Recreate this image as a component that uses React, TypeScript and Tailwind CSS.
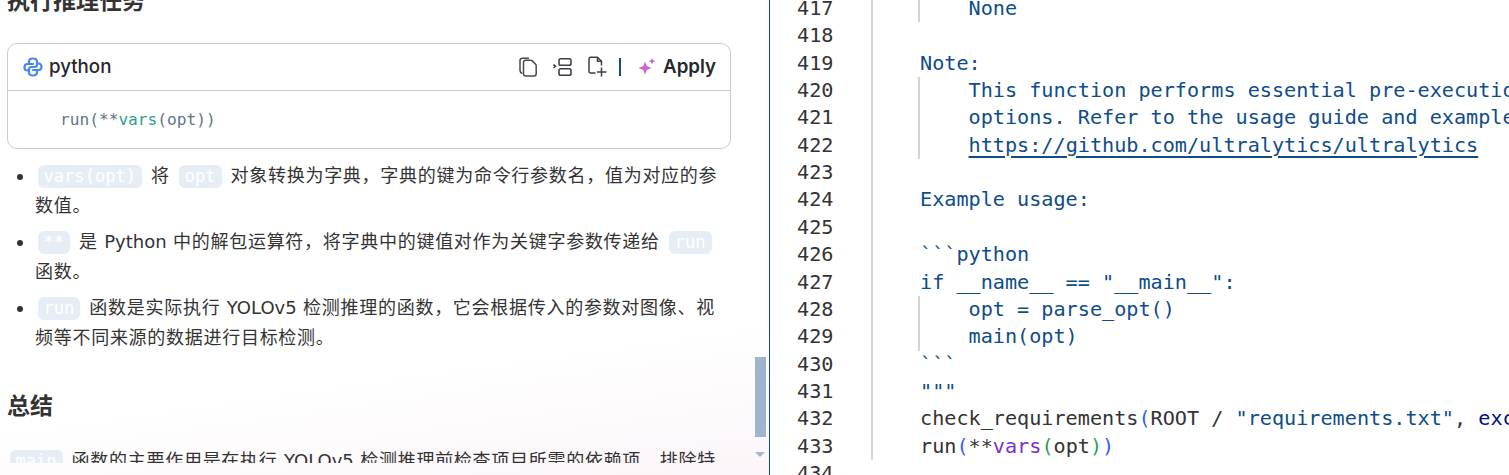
import React from "react";

const nums = [417,418,419,420,421,422,423,424,425,426,427,428,429,430,431,432,433,434];
const B = "text-[#0f4c8a]";
type Row = { g?: boolean; c: React.ReactNode };
const rows: Row[] = [
  { g: true, c: <span className={B}>    None</span> },
  { c: "" },
  { c: <span className={B}>Note:</span> },
  { g: true, c: <span className={B}>    This function performs essential pre-execution checks and initiates</span> },
  { g: true, c: <span className={B}>    options. Refer to the usage guide and examples for more information:</span> },
  { g: true, c: <span className={B}>    <span className="underline decoration-2 underline-offset-[4px]">https://github.com/ultralytics/ultralytics</span></span> },
  { c: "" },
  { c: <span className={B}>Example usage:</span> },
  { c: "" },
  { c: <span className={B}>```python</span> },
  { c: <span className={B}>if __name__ == "__main__":</span> },
  { g: true, c: <span className={B}>    opt = parse_opt()</span> },
  { g: true, c: <span className={B}>    main(opt)</span> },
  { c: <span className={B}>```</span> },
  { c: <span className={B}>"""</span> },
  { c: <><span>check_requirements</span><span className="text-[#3b5bfb]">(</span><span>ROOT / </span><span className={B}>"requirements.txt"</span><span>, </span><span className="text-[#001080]">exclude</span></> },
  { c: <><span>run</span><span className="text-[#3b5bfb]">(</span><span>**</span><span className="text-[#7b30d0]">vars</span><span className="text-[#2e9e5b]">(</span><span>opt</span><span className="text-[#2e9e5b]">)</span><span className="text-[#3b5bfb]">)</span></> },
  { c: "" },
];

function Code({ children }: { children: React.ReactNode }) {
  return (
    <code className="mx-[2.5px] inline-block rounded-[6px] bg-[#e7edf5] px-[6px] text-[17.1px] tracking-normal leading-[23px] text-white align-baseline font-['DejaVu_Sans_Mono',monospace]">
      {children}
    </code>
  );
}

function Latin({ children }: { children: React.ReactNode }) {
  return <span className="tracking-normal">{children}</span>;
}

function PythonIcon() {
  return (
    <svg className="mr-[6px]" width="20" height="20" viewBox="0 0 20 20" fill="none" stroke="#4a86f0" strokeWidth="2.2" strokeLinecap="round" strokeLinejoin="round">
      <path d="M10 7H4.5C2.6 7 1.5 8.3 1.5 10.2C1.5 12.1 2.6 13.5 4.5 13.5H6" />
      <path d="M10 13H15.5C17.4 13 18.5 11.7 18.5 9.8C18.5 7.9 17.4 6.5 15.5 6.5H14" />
      <path d="M6 7V4.5C6 2.6 7.6 1.5 10 1.5C12.4 1.5 14 2.6 14 4.5V7.5C14 8.9 13 10 11.6 10H8.4C7 10 6 11.1 6 12.5V15.5C6 17.4 7.6 18.5 10 18.5C12.4 18.5 14 17.4 14 15.5V13" />
    </svg>
  );
}
function CopyIcon() {
  return (
    <svg width="19" height="20" viewBox="0 0 19 20" fill="none" stroke="#4a4a4f" strokeWidth="1.5" strokeLinejoin="round">
      <path d="M3.2 16.5C1.8 16 1 15 1 13.6V3.6C1 2.2 2 1.2 3.4 1.2H10" />
      <path d="M4.5 5.2C4.5 4 5.3 3.2 6.5 3.2H11.5C12.3 3.2 13 3.5 13.6 4.1L16.2 6.7C16.8 7.3 17.2 8 17.2 8.8V16.8C17.2 18 16.3 18.9 15.1 18.9H6.6C5.4 18.9 4.5 18 4.5 16.8Z" />
    </svg>
  );
}
function TreeIcon() {
  return (
    <svg width="19" height="20" viewBox="0 0 19 20" fill="none" stroke="#3f3f46" strokeWidth="1.6">
      <rect x="6" y="1.8" width="12" height="6.4" rx="1.8" />
      <rect x="6" y="11.8" width="12" height="6.4" rx="1.8" />
      <path d="M0.5 7.5 2.5 9.3 0.5 11" />
    </svg>
  );
}
function FilePlusIcon() {
  return (
    <svg width="20" height="21" viewBox="0 0 20 21" fill="none" stroke="#3f3f46" strokeWidth="1.5" strokeLinejoin="round">
      <path d="M7.5 17H2.8C1.6 17 1 16.2 1 15.2V2.9C1 1.9 1.6 1.2 2.8 1.2H9.5L13.5 5.2V9.5" />
      <path d="M9.5 1.2V5.2H13.5" />
      <path d="M13.5 11.5V20.5M9 16H18.5" />
    </svg>
  );
}
function Sparkle() {
  return (
    <svg width="18" height="18" viewBox="0 0 18 18">
      <defs>
        <linearGradient id="spk" x1="0" y1="1" x2="1" y2="0">
          <stop offset="0" stopColor="#fb5a6e" />
          <stop offset="0.55" stopColor="#d45fd8" />
          <stop offset="1" stopColor="#8e5cf0" />
        </linearGradient>
      </defs>
      <path d="M7 3.5 8.6 8 13.5 10 8.6 12 7 17 5.4 12 0.5 10 5.4 8Z" fill="url(#spk)" />
      <path d="M14 0 14.9 2.3 17.2 3.2 14.9 4.1 14 6.4 13.1 4.1 10.8 3.2 13.1 2.3Z" fill="#a45cf0" />
    </svg>
  );
}

export default function App() {
  return (
    <div className="flex h-[475px] w-[1509px] overflow-hidden bg-white font-['DejaVu_Sans','Noto_Sans_CJK_SC',sans-serif]">
      <div className="relative h-full w-[769px] shrink-0 overflow-hidden bg-[linear-gradient(172deg,#ffffff_74%,#fcf5f9_100%)]">
        <div className="h-[463px] overflow-hidden pl-[7px] pr-[38px] text-[#333] text-[18px]">
          <div className="-mt-[11px] h-[24px] text-[23px] leading-[24px] font-bold text-[#333]">执行推理任务</div>
          <div className="mt-[30px] h-[106px] overflow-hidden rounded-[10px] border border-[#cbcbcb]">
            <div className="flex h-[47px] items-center border-b border-[#cbcbcb] pl-[15px] pr-[14px]">
              <PythonIcon />
              <span className="text-[18.7px] font-medium text-[#27272a] font-['Inter',sans-serif]">python</span>
              <div className="ml-auto flex items-center">
                <CopyIcon />
                <span className="ml-[15px]"><TreeIcon /></span>
                <span className="ml-[16px]"><FilePlusIcon /></span>
                <span className="ml-[11px] mr-[17px] h-[18px] w-[2px] bg-[#0f4c8a]" />
                <Sparkle />
                <span className="ml-[7px] text-[18.7px] font-semibold text-[#27272a] font-['Inter',sans-serif]">Apply</span>
              </div>
            </div>
            <div className="pl-[52px] pt-[16px] text-[16.16px] leading-[26px] text-[#5f7784] font-['DejaVu_Sans_Mono',monospace]">
              run(**<span className="text-[#2f9e8f]">vars</span>(opt))
            </div>
          </div>
          <ul className="mt-[12px] list-disc pl-[28px] pr-[7px] text-[18px] leading-[30px] tracking-[0.72px]">
            <li className="pb-[6px]"><Code>vars(opt)</Code> 将 <Code>opt</Code> 对象转换为字典，字典的键为命令行参数名，值为对应的参数值。</li>
            <li className="pb-[6px]"><Code>**</Code> 是 <Latin>Python</Latin> 中的解包运算符，将字典中的键值对作为关键字参数传递给 <Code>run</Code> 函数。</li>
            <li><Code>run</Code> 函数是实际执行 <Latin>YOLOv5</Latin> 检测推理的函数，它会根据传入的参数对图像、视频等不同来源的数据进行目标检测。</li>
          </ul>
          <div className="mt-[37px] text-[23px] leading-[32px] font-bold text-[#333]">总结</div>
          <p className="mt-[24px] text-[18px] leading-[30px] tracking-[0.72px]"><Code>main</Code> 函数的主要作用是在执行 <Latin>YOLOv5</Latin> 检测推理前检查项目所需的依赖项，排除特定的包，并且调用</p>
        </div>
        <div className="absolute right-[3px] top-[357px] h-[80px] w-[11px] bg-[#a0b4cf]" />
        <div className="absolute right-[4px] top-[452px] h-0 w-0 border-x-[5px] border-t-[5px] border-x-transparent border-t-[#a0b4cf]" />
      </div>
      <div className="h-full w-px shrink-0 bg-[#0f4c8a]" />
      <div className="flex h-full flex-1 overflow-hidden text-[20.16px] leading-[27.375px] text-[#333] font-['DejaVu_Sans_Mono',monospace]">
        <div className="-mt-[5.25px] w-[101px] shrink-0 pl-[27px]">
          {nums.map((n) => <div key={n} className="h-[27.375px]">{n}</div>)}
        </div>
        <div className="h-[460px] w-[2px] shrink-0 bg-[#d4d4d4]" />
        <div className="-mt-[5.25px] min-w-0 flex-1 pl-[45px]">
          {rows.map((r, i) => (
            <div key={i} className={`h-[27.375px] whitespace-pre border-l-2 ${r.g ? "border-[#d4d4d4]" : "border-transparent"}`}>{r.c}</div>
          ))}
        </div>
      </div>
    </div>
  );
}
